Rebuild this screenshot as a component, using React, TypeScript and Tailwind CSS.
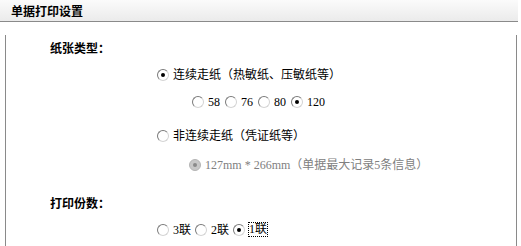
import React from 'react';

type RadioProps = {
    checked?: boolean;
    disabled?: boolean;
};

// Classic IE-style radio circle
const Radio: React.FC<RadioProps> = ({ checked, disabled }) => (
    <span
        className={`relative inline-block w-[12px] h-[12px] rounded-full border shrink-0 ${
            disabled
                ? 'border-[#b5b5b5] bg-[#c8c8c8]'
                : 'border-t-[#7a7a7a] border-l-[#7a7a7a] border-r-[#d4d4d4] border-b-[#d4d4d4] bg-white'
        }`}
    >
        {checked && (
            <span
                className={`absolute left-[3px] top-[3px] w-[4px] h-[4px] rounded-full ${
                    disabled ? 'bg-[#8a8a8a]' : 'bg-black'
                }`}
            />
        )}
    </span>
);

const Option: React.FC<{ label: string; checked?: boolean; focused?: boolean; className?: string }> = ({
    label,
    checked,
    focused,
    className = '',
}) => (
    <label className={`flex items-center gap-[4px] ${className}`}>
        <Radio checked={checked} />
        <span className={focused ? 'outline outline-1 outline-dotted outline-black leading-[13px]' : ''}>{label}</span>
    </label>
);

export default function App() {
    return (
        <div
            className="w-[521px] h-[246px] bg-white text-[12px] text-black overflow-hidden"
            style={{ fontFamily: '"Liberation Serif", "Noto Sans CJK SC", serif' }}
        >
            <div className="w-[518px] h-[22px] flex items-center pl-[11px] border-b border-[#8a8a8a] bg-gradient-to-b from-[#fbfbfb] to-[#ebebeb]">
                <span className="font-bold" style={{ fontFamily: '"Noto Sans CJK SC", sans-serif' }}>单据打印设置</span>
            </div>

            <div className="ml-[5px] w-[512px] h-[224px] border-l border-r border-[#8a8a8a]">
                <div className="h-[26px] mt-[13px] flex items-center pl-[44px] font-bold" style={{ fontFamily: '"Noto Sans CJK SC", sans-serif' }}>
                    纸张类型：
                </div>

                <div className="h-[27px] flex items-center pl-[151px]">
                    <Option label="连续走纸（热敏纸、压敏纸等）" checked />
                </div>

                <div className="h-[27px] flex items-center pl-[186px] gap-[5px]">
                    <Option label="58" />
                    <Option label="76" />
                    <Option label="80" />
                    <Option label="120" checked />
                </div>

                <div className="h-[26px] mt-[8px] flex items-center pl-[151px]">
                    <Option label="非连续走纸（凭证纸等）" />
                </div>

                <div className="h-[26px] mt-[3px] flex items-center pl-[183px] text-[#808080]">
                    <span className="flex items-center gap-[4px]">
                        <Radio checked disabled />
                        <span>127mm * 266mm（单据最大记录5条信息）</span>
                    </span>
                </div>

                <div className="h-[26px] mt-[12px] flex items-center pl-[44px] font-bold" style={{ fontFamily: '"Noto Sans CJK SC", sans-serif' }}>
                    打印份数：
                </div>

                <div className="h-[27px] flex items-center pl-[151px] gap-[4px]">
                    <Option label="3联" />
                    <Option label="2联" />
                    <Option label="1联" checked focused />
                </div>
            </div>
        </div>
    );
}
